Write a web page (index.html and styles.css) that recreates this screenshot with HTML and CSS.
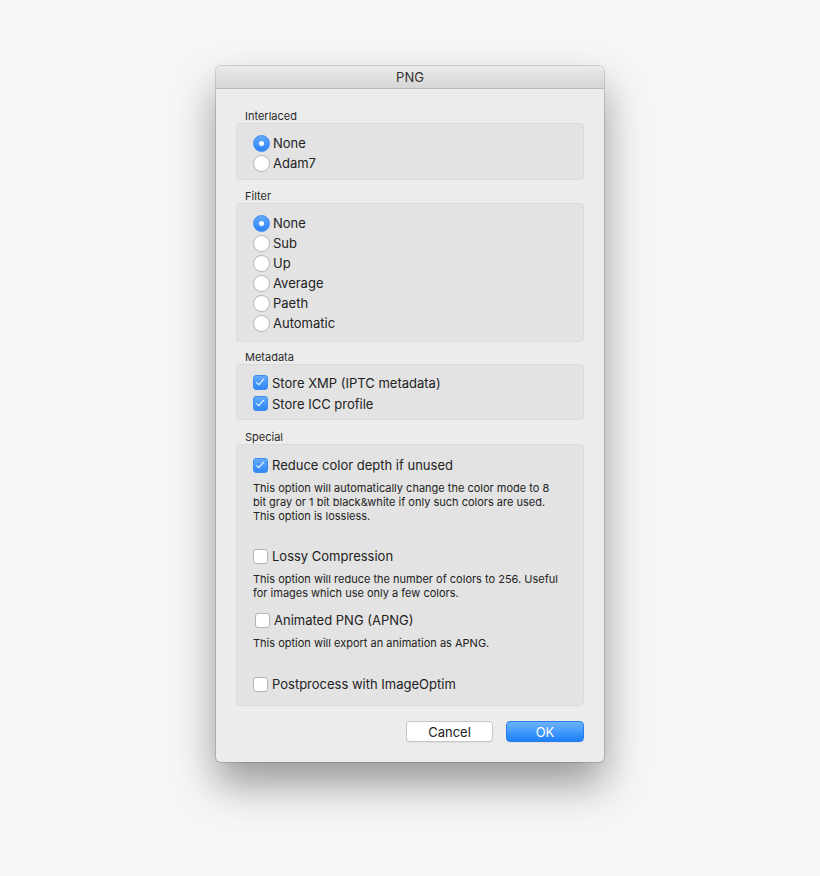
FILE: index.html
```html
<!DOCTYPE html>
<html lang="en">
<head>
  <meta charset="UTF-8" />
  <title>PNG</title>
  <link rel="stylesheet" href="styles.css">
</head>
<body>

  <div class="window">
    <div class="titlebar">PNG</div>

    <div class="content">
      <div class="group-label">Interlaced</div>
      <div class="group">
        <label class="row"><span class="radio checked"></span>None</label>
        <label class="row"><span class="radio"></span>Adam7</label>
      </div>

      <div class="group-label">Filter</div>
      <div class="group filter">
        <label class="row"><span class="radio checked"></span>None</label>
        <label class="row"><span class="radio"></span>Sub</label>
        <label class="row"><span class="radio"></span>Up</label>
        <label class="row"><span class="radio"></span>Average</label>
        <label class="row"><span class="radio"></span>Paeth</label>
        <label class="row"><span class="radio"></span>Automatic</label>
      </div>

      <div class="group-label">Metadata</div>
      <div class="group meta">
        <label class="row tall"><span class="check checked"></span>Store XMP (IPTC metadata)</label>
        <label class="row tall"><span class="check checked"></span>Store ICC profile</label>
      </div>

      <div class="group-label">Special</div>
      <div class="group special">
        <label class="row"><span class="check checked"></span>Reduce color depth if unused</label>
        <p class="desc">This option will automatically change the color mode to 8 bit gray or 1 bit black&amp;white if only such colors are used. This option is lossless.</p>

        <label class="row gap-lg"><span class="check"></span>Lossy Compression</label>
        <p class="desc">This option will reduce the number of colors to 256. Useful for images which use only a few colors.</p>

        <label class="row gap-md shifted"><span class="check"></span>Animated PNG (APNG)</label>
        <p class="desc">This option will export an animation as APNG.</p>

        <label class="row gap-xl"><span class="check"></span>Postprocess with ImageOptim</label>
      </div>

      <div class="actions">
        <button class="btn">Cancel</button>
        <button class="btn primary">OK</button>
      </div>
    </div>
  </div>

</body>
</html>
```

FILE: styles.css
```css
html,
body {
  height: 100%;
}

body {
  margin: 0;
  background: #f6f6f6;
  font-family: Inter, "Noto Sans", sans-serif;
  color: #262626;
  display: flex;
  justify-content: center;
  align-items: flex-start;
  padding-top: 66px;
  box-sizing: border-box;
}

.window {
  width: 388px;
  background: #ececec;
  border-radius: 5px;
  box-shadow: 0 0 0 1px rgba(0, 0, 0, 0.14), 0 22px 40px rgba(0, 0, 0, 0.38);
  overflow: hidden;
}

.titlebar {
  height: 22px;
  line-height: 22px;
  text-align: center;
  font-size: 13px;
  color: #333;
  background: linear-gradient(#ebebeb, #d5d5d5);
  border-bottom: 1px solid #b9b9b9;
}

.content {
  padding: 20px 20px 20px 20px;
}

.group-label {
  font-size: 11px;
  line-height: 14px;
  padding-left: 9px;
  color: #2a2a2a;
}

.group {
  background: #e3e3e3;
  border: 1px solid #dadada;
  border-radius: 4px;
  padding: 9px 0 6px 16px;
  margin-bottom: 9px;
}

.group.filter {
  padding-bottom: 8px;
  margin-bottom: 8px;
}

.group.meta {
  padding-top: 7px;
  padding-bottom: 5px;
  margin-bottom: 10px;
}

.group.special {
  padding-top: 10px;
  padding-bottom: 11px;
  margin-bottom: 15px;
}

.row {
  display: flex;
  align-items: center;
  height: 20px;
  font-size: 13px;
  color: #222;
}

.row.tall {
  height: 21px;
}

.row.gap-lg {
  margin-top: 23px;
}

.row.gap-md {
  margin-top: 10px;
}

.row.gap-xl {
  margin-top: 24px;
}

.row.shifted {
  padding-left: 2px;
}

.radio {
  width: 15px;
  height: 15px;
  border-radius: 50%;
  background: #fff;
  border: 1px solid #b4b4b4;
  margin-right: 3px;
  flex-shrink: 0;
  position: relative;
}

.radio.checked {
  background: linear-gradient(#62aafc, #2b84f7);
  border-color: #3b8cf0;
}

.radio.checked::after {
  content: "";
  position: absolute;
  left: 5px;
  top: 5px;
  width: 5px;
  height: 5px;
  border-radius: 50%;
  background: #fff;
}

.check {
  width: 13px;
  height: 13px;
  border-radius: 3px;
  background: #fff;
  border: 1px solid #b4b4b4;
  margin-right: 4px;
  flex-shrink: 0;
  position: relative;
}

.check.checked {
  background: linear-gradient(#64acfc, #2f86f6);
  border-color: #3b8cf0;
}

.check.checked::after {
  content: "";
  position: absolute;
  left: 4px;
  top: 1px;
  width: 3px;
  height: 7px;
  border: solid #fff;
  border-width: 0 1.6px 1.6px 0;
  transform: rotate(40deg);
}

.desc {
  margin: 6px 0 0;
  max-width: 308px;
  font-size: 11px;
  line-height: 14px;
  color: #222;
}

.actions {
  display: flex;
  justify-content: flex-end;
  gap: 13px;
}

.btn {
  height: 21px;
  width: 87px;
  font-family: inherit;
  font-size: 13px;
  color: #222;
  background: #fff;
  border: 1px solid #c6c6c6;
  border-radius: 4px;
  padding: 0;
  box-shadow: 0 1px 0 rgba(0, 0, 0, 0.05);
}

.btn.primary {
  width: 78px;
  color: #fff;
  background: linear-gradient(#6cb4fb, #1c80fa);
  border-color: #2a7ef0;
}
```
